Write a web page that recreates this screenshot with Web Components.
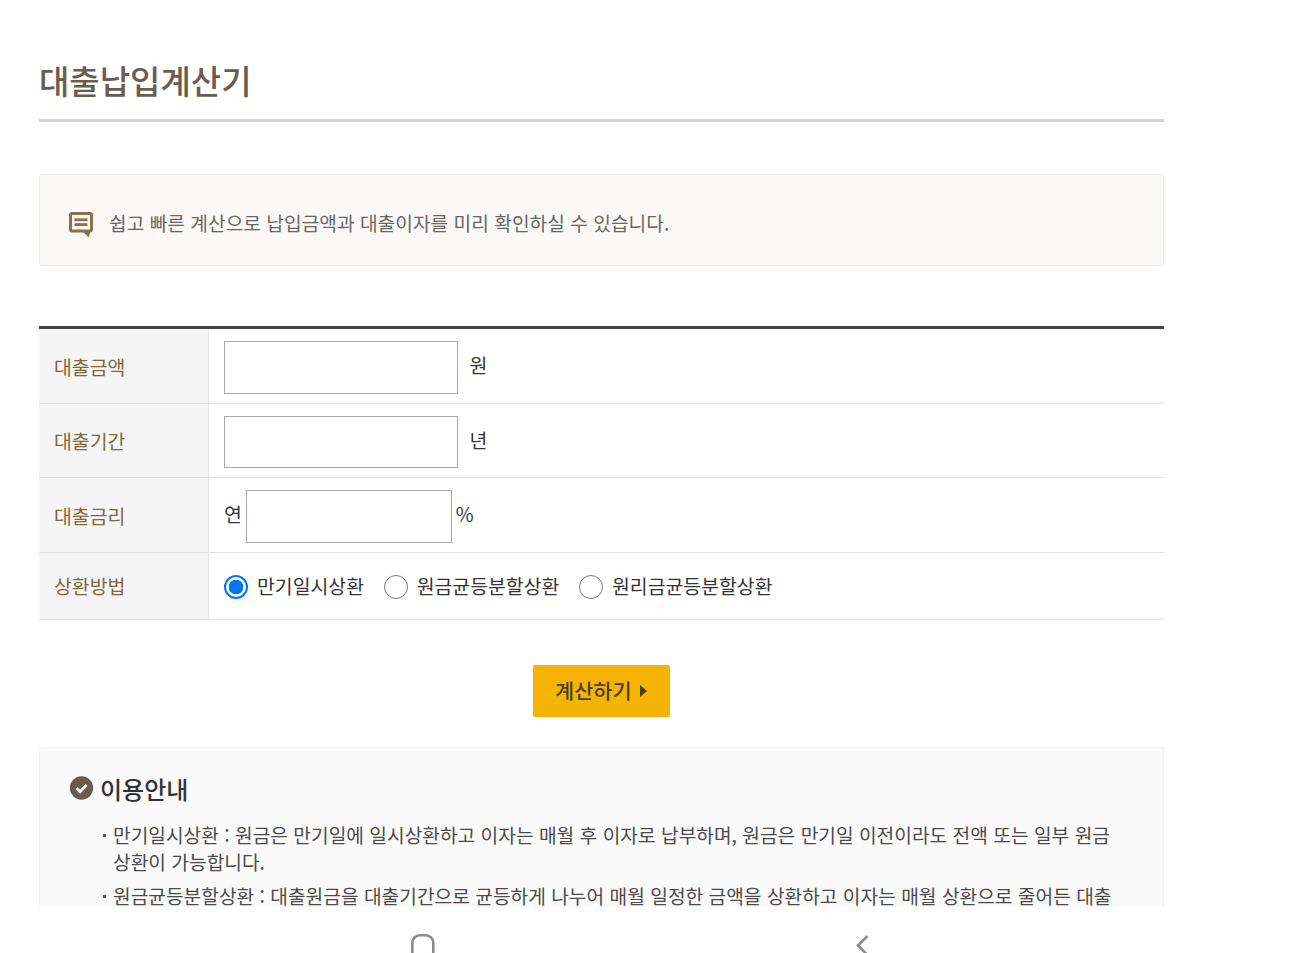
<!DOCTYPE html>
<html lang="ko">
<head>
<meta charset="utf-8">
<title>대출납입계산기</title>
<style>
  html, body { margin: 0; padding: 0; background: #fff; }
  body { font-family: "Noto Sans CJK KR", "Noto Sans", sans-serif; }
</style>
</head>
<body>
<phone-frame>
  <page-title>대출납입계산기</page-title>
  <notice-box>쉽고 빠른 계산으로 납입금액과 대출이자를 미리 확인하실 수 있습니다.</notice-box>
  <calc-form>
    <calc-row label="대출금액">
      <amount-input width="234"></amount-input><span class="unit" style="margin-left:11.5px;margin-top:-5px">원</span>
    </calc-row>
    <calc-row label="대출기간">
      <amount-input width="234"></amount-input><span class="unit" style="margin-left:11.5px;margin-top:-4px">년</span>
    </calc-row>
    <calc-row label="대출금리">
      <span class="unit" style="margin-right:4px;margin-top:-5px">연</span><amount-input width="206"></amount-input><span class="unit" style="margin-left:4px;margin-top:-5px">%</span>
    </calc-row>
    <calc-row label="상환방법" radio>
      <radio-set></radio-set>
    </calc-row>
  </calc-form>
  <calc-button>계산하기</calc-button>
  <guide-box heading="이용안내">
    <guide-item>만기일시상환 : 원금은 만기일에 일시상환하고 이자는 매월 후 이자로 납부하며, 원금은 만기일 이전이라도 전액 또는 일부 원금 상환이 가능합니다.</guide-item>
    <guide-item>원금균등분할상환 : 대출원금을 대출기간으로 균등하게 나누어 매월 일정한 금액을 상환하고 이자는 매월 상환으로 줄어든 대출 잔액에 대해서 납부합니다.</guide-item>
  </guide-box>
</phone-frame>

<script>
const define = (tag, html, setup) => {
  customElements.define(tag, class extends HTMLElement {
    constructor() {
      super()
      this.attachShadow({ mode: 'open' }).innerHTML = html
    }
    connectedCallback() {
      if (setup) setup(this, this.shadowRoot)
    }
  })
}

define('phone-frame', `
  <style>
    :host { display: flex; flex-direction: column; height: 953px; overflow: hidden; background: #fff; }
    .scroll { height: 907px; overflow: hidden; padding: 0 135px 0 39px; box-sizing: border-box; }
    .nav { height: 46px; display: flex; padding: 27px 0 0 411px; box-sizing: border-box; overflow: hidden; gap: 420px; }
    svg { display: block; flex: none; }
  </style>
  <div class="scroll"><slot></slot></div>
  <div class="nav">
    <svg width="24" height="30" viewBox="0 0 24 30"><rect x="1.3" y="1.3" width="21" height="24" rx="7.5" fill="none" stroke="#8c8c8c" stroke-width="2.6"/></svg>
    <svg width="14" height="30" viewBox="0 0 14 30"><path d="M12.5 2 L3 11.5 L12.5 21" fill="none" stroke="#8c8c8c" stroke-width="2.6"/></svg>
  </div>
`)

define('page-title', `
  <style>
    :host { display: block; height: 122px; box-sizing: border-box; padding-top: 58px; border-bottom: 3px solid #d6d4d1; }
    h1 { margin: 0; font: 500 33px/44px "Noto Sans CJK KR", sans-serif; color: #6a5d50; }
  </style>
  <h1><slot></slot></h1>
`)

define('notice-box', `
  <style>
    :host { display: flex; align-items: center; gap: 16px; height: 92px; margin-top: 52px; box-sizing: border-box; padding: 5px 0 0 29px;
      background: #faf9f7; border: 1px solid #f1efec; border-radius: 3px; font-size: 19.2px; color: #666; line-height: 26px; }
    svg { display: block; flex: none; margin-top: 4px; }
  </style>
  <svg width="24" height="26" viewBox="0 0 24 26">
    <path d="M3 1.5 H21 Q22.5 1.5 22.5 3 V17.5 Q22.5 19 21 19 H3 Q1.5 19 1.5 17.5 V3 Q1.5 1.5 3 1.5 Z" fill="none" stroke="#8c7146" stroke-width="3"/>
    <rect x="5.5" y="6.4" width="13" height="2.8" fill="#8c7146"/>
    <rect x="5.5" y="11.2" width="13" height="2.8" fill="#8c7146"/>
    <path d="M14 20 H21 L20 25.5 Z" fill="#8c7146"/>
  </svg>
  <span><slot></slot></span>
`)

define('calc-form', `
  <style>
    :host { display: block; margin-top: 60px; border-top: 3px solid #444; }
  </style>
  <slot></slot>
`)

define('calc-row', `
  <style>
    :host { display: grid; grid-template-columns: 170px 1fr; border-bottom: 1px solid #e0e0e0; font-size: 19.4px; color: #333; }
    .th { display: flex; align-items: center; padding: 1px 0 0 15px; background: #f5f5f5; border-right: 1px solid #e3e3e3; color: #80683a; }
    .td { display: flex; align-items: center; padding: 12px 15px 9px; min-width: 0; }
    :host([radio]) .td { padding: 0 15px; height: 66px; }
    :host([radio]) .th { padding-top: 0; }
    ::slotted(.unit) { line-height: 26px; }
  </style>
  <div class="th"></div>
  <div class="td"><slot></slot></div>
`, (el, root) => {
  root.querySelector('.th').textContent = el.getAttribute('label')
})

define('amount-input', `
  <style>
    :host { display: block; flex: none; }
    input { display: block; box-sizing: border-box; height: 52.67px; width: 100%; margin: 0; padding: 0 8px; background: #fff; border: 1px solid #aaa; border-radius: 0; font: inherit; }
  </style>
  <input type="text">
`, (el, root) => {
  el.style.width = el.getAttribute('width') + 'px'
})

define('radio-set', `
  <style>
    :host { display: flex; align-items: center; font-size: 19.4px; color: #333; }
    label { display: flex; align-items: center; gap: 9px; margin-right: 19.6px; line-height: 26px; }
    input { appearance: none; box-sizing: border-box; width: 24px; height: 24px; margin: 2px 0 0; flex: none; border: 1.6px solid #767676; border-radius: 50%; background: #fff; }
    input:checked { border: 2px solid #0075ff; background: radial-gradient(circle, #0075ff 0 7px, #fff 7.6px); }
  </style>
  <label><input type="radio" name="how" checked><span>만기일시상환</span></label>
  <label><input type="radio" name="how"><span>원금균등분할상환</span></label>
  <label><input type="radio" name="how"><span>원리금균등분할상환</span></label>
`)

define('calc-button', `
  <style>
    :host { display: flex; justify-content: center; margin-top: 45px; }
    button { display: flex; align-items: center; gap: 8px; box-sizing: border-box; width: 137px; height: 52px; padding: 0 0 0 22px; border: 0; border-radius: 2px;
      background: #f5b400; color: #4b3c1e; font: 500 20.8px/26px "Noto Sans CJK KR", sans-serif; }
    span { margin-top: -2px; }
    i { display: block; width: 0; height: 0; border-left: 7px solid #4b3c1e; border-top: 6px solid transparent; border-bottom: 6px solid transparent; }
  </style>
  <button><span><slot></slot></span><i></i></button>
`)

define('guide-box', `
  <style>
    :host { display: block; margin-top: 30px; padding: 25px 50px 30px 30px; background: #fafafa; border: 1px solid #f3f3f3; border-radius: 2px; }
    h2 { display: flex; align-items: center; gap: 6px; margin: 0; font: 500 24px/32px "Noto Sans CJK KR", sans-serif; color: #333; }
    svg { display: block; flex: none; margin-top: -2px; }
    .items { margin-top: 17px; }
  </style>
  <h2>
    <svg width="24" height="24" viewBox="0 0 24 24"><circle cx="11.5" cy="12" r="11.7" fill="#6a5d50"/><path d="M6.5 12.3 L10.1 15.8 L16.5 9" fill="none" stroke="#fff" stroke-width="2.8"/></svg>
    <span class="t"></span>
  </h2>
  <div class="items"><slot></slot></div>
`, (el, root) => {
  root.querySelector('.t').textContent = el.getAttribute('heading')
})

define('guide-item', `
  <style>
    :host { display: block; position: relative; margin-bottom: 7px; padding-left: 43px; font-size: 19.2px; line-height: 27px; color: #4a4a4a; }
    i { position: absolute; left: 33px; top: 12px; width: 3px; height: 3px; background: #555; }
  </style>
  <i></i><slot></slot>
`)
</script>
</body>
</html>
